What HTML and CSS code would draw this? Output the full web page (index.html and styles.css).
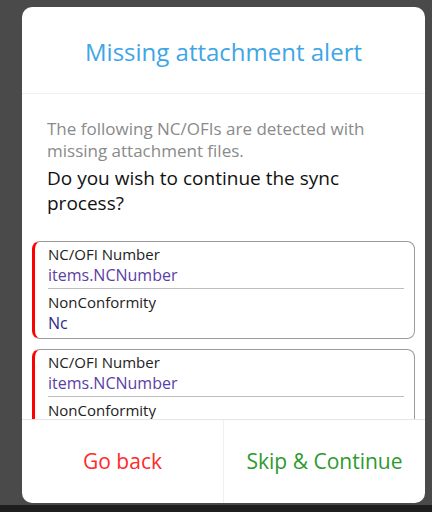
FILE: index.html
```html
<!DOCTYPE html>
<html lang="en">
<head>
  <meta charset="UTF-8">
  <title>Missing attachment alert</title>
  <link rel="stylesheet" href="styles.css">
</head>
<body>
  <div class="stage">
    <div class="dialog">
      <div class="dialog-header">Missing attachment alert</div>

      <div class="dialog-body">
        <p class="note">The following NC/OFIs are detected with missing attachment files.</p>
        <p class="question">Do you wish to continue the sync process?</p>

        <div class="card">
          <div class="field">
            <div class="field-label">NC/OFI Number</div>
            <div class="field-value number">items.NCNumber</div>
          </div>
          <div class="field">
            <div class="field-label">NonConformity</div>
            <div class="field-value type">Nc</div>
          </div>
        </div>

        <div class="card">
          <div class="field">
            <div class="field-label">NC/OFI Number</div>
            <div class="field-value number">items.NCNumber</div>
          </div>
          <div class="field">
            <div class="field-label">NonConformity</div>
            <div class="field-value type">Nc</div>
          </div>
        </div>
      </div>

      <div class="dialog-footer">
        <button type="button" class="btn btn-back">Go back</button>
        <button type="button" class="btn btn-skip">Skip &amp; Continue</button>
      </div>
    </div>
  </div>
  <div class="navbar"></div>
</body>
</html>
```

FILE: styles.css
```css
html, body {
  margin: 0;
  height: 512px;
  overflow: hidden;
}
body {
  font-family: 'Open Sans', 'Noto Sans', sans-serif;
  background-color: #4a4a4a;
  display: flex;
  flex-direction: column;
}
.stage {
  flex: 1;
  padding: 7px 7px 2px 22px;
  display: flex;
  min-height: 0;
}
.navbar {
  height: 7px;
  background-color: #1e1e1e;
}
.dialog {
  flex: 1;
  background-color: #fff;
  border-radius: 10px;
  display: flex;
  flex-direction: column;
  overflow: hidden;
}
.dialog-header {
  height: 87px;
  border-bottom: 1px solid #f0f0f0;
  display: flex;
  align-items: center;
  justify-content: center;
  color: #3ea6e6;
  font-size: 24px;
  padding-top: 3px;
  box-sizing: border-box;
}
.dialog-body {
  flex: 1;
  overflow: hidden;
  padding: 24px 10px 0 10px;
}
.note {
  margin: 0 15px;
  color: #8a8a8a;
  font-size: 17px;
  line-height: 22px;
}
.question {
  margin: 4px 20px 25px 15px;
  color: #111;
  font-size: 19px;
  line-height: 25px;
}
.card {
  border: 1px solid #9a9a9a;
  border-left: 3px solid #ff0000;
  border-radius: 8px;
  padding: 2px 10px 4px 13px;
  margin-bottom: 10px;
}
.field + .field {
  border-top: 1px solid #bdbdbd;
  margin-top: 2px;
  padding-top: 3px;
}
.field-label {
  color: #222;
  font-size: 15px;
  line-height: 20px;
}
.field-value {
  font-size: 16px;
  line-height: 22px;
}
.field-value.number {
  color: #5b3ea6;
}
.field-value.type {
  color: #2b2c8a;
}
.dialog-footer {
  height: 83px;
  border-top: 1px solid #e6e6e6;
  display: flex;
}
.btn {
  flex: 1;
  border: none;
  background: none;
  font-family: inherit;
  font-size: 21px;
  cursor: pointer;
  padding: 0 0 2px;
}
.btn + .btn {
  border-left: 1px solid #f0f0f0;
}
.btn-back {
  color: #ff2a2a;
}
.btn-skip {
  color: #2e9a2e;
}
```
